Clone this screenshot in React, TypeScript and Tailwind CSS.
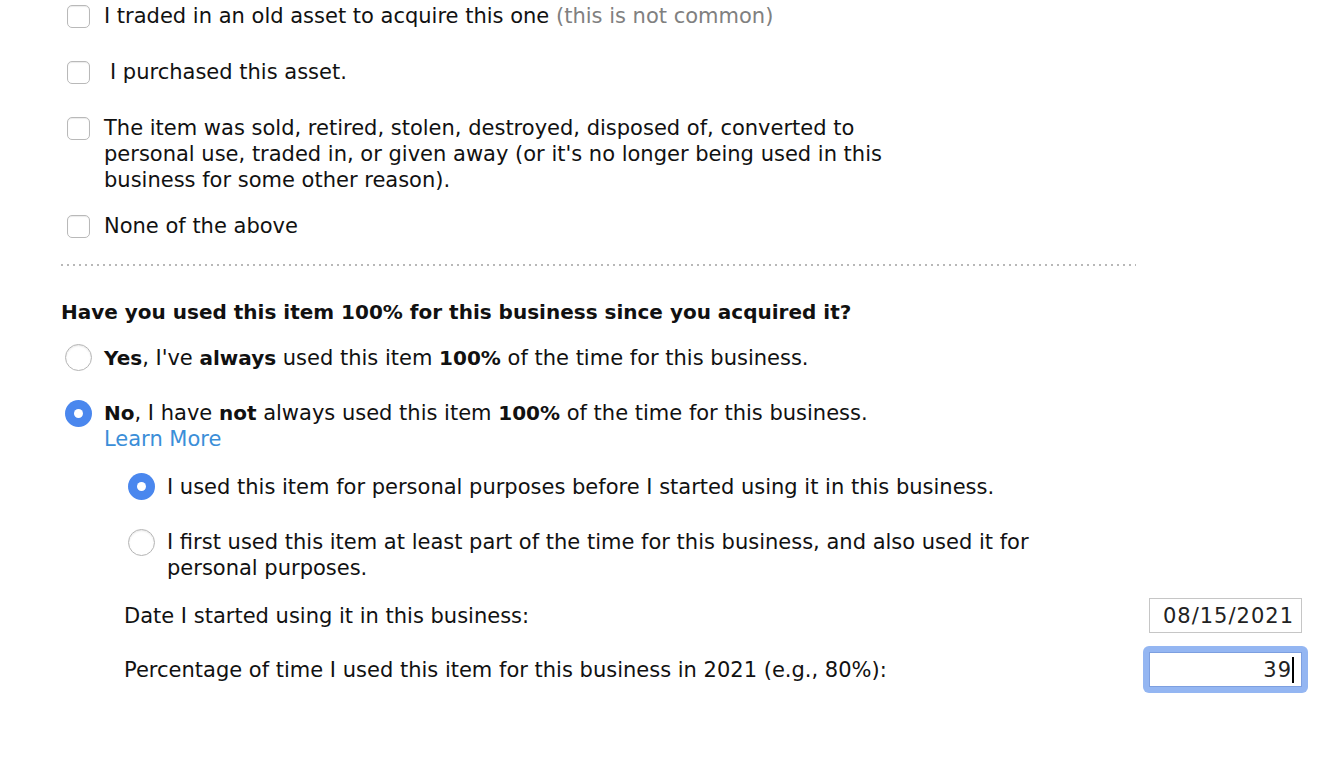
import { FC, ReactNode } from "react";

const Checkbox: FC = () => (
  <span className="mt-[2px] h-[23px] w-[23px] shrink-0 rounded-[5px] border border-[#b9b9b9] bg-white shadow-[inset_0_1px_1px_rgba(0,0,0,0.08)]" />
);

const Radio: FC<{ checked?: boolean }> = ({ checked }) =>
  checked ? (
    <span className="flex h-[27px] w-[27px] shrink-0 items-center justify-center rounded-full bg-[#4a87ee]">
      <span className="h-[9px] w-[9px] rounded-full bg-white" />
    </span>
  ) : (
    <span className="h-[27px] w-[27px] shrink-0 rounded-full border border-[#b5b5b5] bg-white shadow-[inset_0_1px_2px_rgba(0,0,0,0.1)]" />
  );

const CheckRow: FC<{ children: ReactNode; className?: string }> = ({ children, className }) => (
  <div className={`flex items-start gap-[14px] pl-[6px] ${className ?? ""}`}>
    <Checkbox />
    <div>{children}</div>
  </div>
);

const App: FC = () => {
  return (
    <div className="min-h-[762px] bg-white font-['DejaVu_Sans',sans-serif] text-[21px] leading-[26px] text-[#111]">
      <div className="pl-[61px] pr-[26px] pt-[3px]">
        <CheckRow>
          I traded in an old asset to acquire this one <span className="text-[#808080]">(this is not common)</span>
        </CheckRow>
        <CheckRow className="mt-[30px]">
          <span className="pl-[6px]">I purchased this asset.</span>
        </CheckRow>
        <CheckRow className="mt-[30px]">
          The item was sold, retired, stolen, destroyed, disposed of, converted to
          <br />
          personal use, traded in, or given away (or it's no longer being used in this
          <br />
          business for some other reason).
        </CheckRow>
        <CheckRow className="mt-[20px]">None of the above</CheckRow>

        <div className="mt-[25px] mr-[166px] h-[2px] bg-[repeating-linear-gradient(to_right,#b8b8b8_0_2px,transparent_2px_6px)]" />

        <h3 className="mt-[33px] text-[20px] font-bold">
          Have you used this item 100% for this business since you acquired it?
        </h3>

        <div className="mt-[19px] flex items-center gap-[12px] pl-[4px]">
          <Radio />
          <div>
            <b className="text-[20px]">Yes</b>, I've <b className="text-[20px]">always</b> used this item{" "}
            <b className="text-[20px]">100%</b> of the time for this business.
          </div>
        </div>

        <div className="mt-[29px] flex items-start gap-[12px] pl-[4px]">
          <Radio checked />
          <div>
            <div>
              <b className="text-[20px]">No</b>, I have <b className="text-[20px]">not</b> always used this item{" "}
              <b className="text-[20px]">100%</b> of the time for this business.
            </div>
            <a className="text-[#3b8ed8]">Learn More</a>
          </div>
        </div>

        <div className="pl-[67px]">
          <div className="mt-[21px] flex items-center gap-[12px]">
            <Radio checked />
            <div>I used this item for personal purposes before I started using it in this business.</div>
          </div>
          <div className="mt-[29px] flex items-start gap-[12px]">
            <Radio />
            <div>
              I first used this item at least part of the time for this business, and also used it for
              <br />
              personal purposes.
            </div>
          </div>
        </div>

        <div className="mt-[17px] flex items-center justify-between pl-[63px]">
          <span>Date I started using it in this business:</span>
          <div className="flex h-[35px] w-[153px] items-center justify-end border border-[#c6c6c6] px-[7px] tracking-[1px] text-[#222]">
            08/15/2021
          </div>
        </div>

        <div className="mt-[13px] flex items-center justify-between pl-[63px]">
          <span>Percentage of time I used this item for this business in 2021 (e.g., 80%):</span>
          <div className="-mr-[6px] rounded-[6px] bg-[#94b6f2] p-[6px]">
            <div className="flex h-[35px] w-[153px] items-center justify-end border border-[#7d9fe0] bg-white px-[7px] tracking-[1px] text-[#222]">
              39<span className="h-[26px] w-[2px] bg-black" />
            </div>
          </div>
        </div>
      </div>
    </div>
  );
};

export default App;
